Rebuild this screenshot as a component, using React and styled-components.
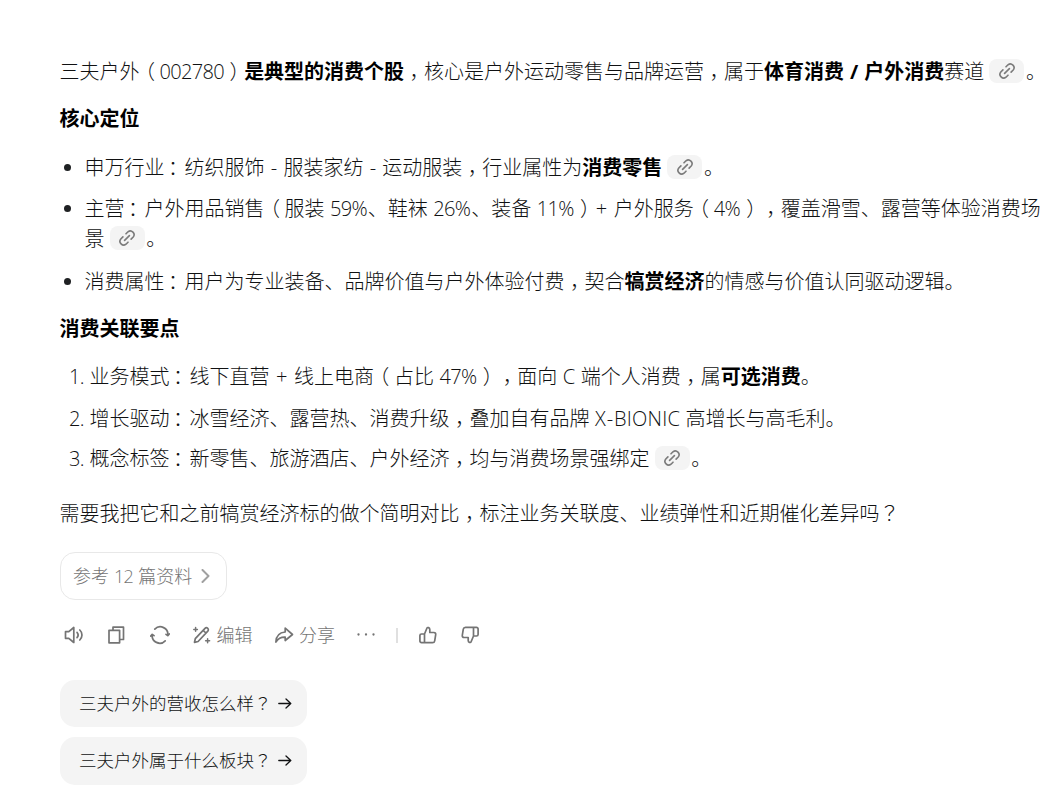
import React from "react";
import styled, { createGlobalStyle } from "styled-components";

const Global = createGlobalStyle`
  body { margin: 0; background: #fff; overflow: hidden; }
  * { box-sizing: border-box; }
`;

const Page = styled.main`
  width: 1060px;
  height: 803px;
  padding: 56px 0 0 59.5px;
  overflow: hidden;
  color: #101112;
  font: 300 20px/30px "Noto Sans CJK SC", sans-serif;
  white-space: nowrap;
  text-spacing-trim: space-all;
`;

const Latin = styled.span`
  font-family: "Open Sans", "Noto Sans CJK SC", sans-serif;
  line-height: 1;
  letter-spacing: ${(p) => p.$track || 0}em;
  padding: 0 ${(p) => p.$pad || 0}em;
`;

const Mark = styled.span`
  font-feature-settings: "halt";
  margin: 0 ${(p) => 0.25 - p.$shift}em 0 ${(p) => 0.25 + p.$shift}em;
`;

const Query = styled.span`
  font-family: "Noto Sans CJK TC", sans-serif;
  line-height: 1;
`;

const Paragraph = styled.p`
  margin: ${(p) => p.$top || 0}px 0 0;
`;

const Heading = styled.h3`
  margin: 17px 0 0;
  font: inherit;
  font-weight: 700;
  color: #000;
`;

const Strong = styled.strong`
  font-weight: 700;
  color: #000;
`;

const List = styled.ul`
  list-style: none;
  margin: ${(p) => p.$top}px 0 0;
  padding: 0;
`;

const Item = styled.li`
  display: flex;
  margin-top: ${(p) => p.$gap || 0}px;
`;

const Bullet = styled.span`
  flex: none;
  width: 7px;
  height: 7px;
  border-radius: 50%;
  background: #1f2123;
  margin: 12px 13.5px 0 4.5px;
`;

const Order = styled.span`
  flex: none;
  width: 30px;
  padding-left: 9.5px;
`;

const Cite = styled.span`
  display: inline-flex;
  align-items: center;
  justify-content: center;
  width: 35px;
  height: 24px;
  margin: 0 1.5px 0 5.2px;
  border-radius: 8px;
  background: #f4f4f4;
  color: #7b7b7b;
  vertical-align: -1px;
`;

const Sources = styled.button`
  display: flex;
  align-items: center;
  gap: 9px;
  width: 167px;
  height: 48px;
  margin: 24px 0 0 0.5px;
  padding: 0 12px;
  border: 1px solid #e8e8e8;
  border-radius: 15px;
  background: #fff;
  color: #747474;
  font: inherit;
  font-size: 18px;
`;

const Label = styled.span`
  padding-bottom: 2px;
`;

const Toolbar = styled.div`
  display: flex;
  align-items: center;
  height: 30px;
  margin-top: 20px;
  padding-left: 4.5px;
  color: #747474;
  font-size: 18px;
`;

const Tool = styled.span`
  display: flex;
  align-items: center;
  gap: ${(p) => p.$gap || 0}px;
  width: ${(p) => p.$w}px;
`;

const Divider = styled.span`
  width: 2px;
  height: 15px;
  margin-right: 20px;
  background: #e0e0e0;
`;

const Suggestion = styled.button`
  display: flex;
  align-items: center;
  gap: 6px;
  width: 247px;
  height: ${(p) => p.$h}px;
  margin: ${(p) => p.$top}px 0 0 0.5px;
  padding: 0 0 0 19px;
  border: 0;
  border-radius: 15px;
  background: #f4f4f4;
  color: #101112;
  font: inherit;
  font-size: 17.5px;
`;

const Svg = styled.svg`
  flex: none;
  display: block;
  fill: none;
  stroke: currentColor;
  stroke-width: ${(p) => p.$sw || 1.7};
  stroke-linecap: round;
  stroke-linejoin: round;
`;

const Chevron = styled(Svg)`
  color: #a0a0a0;
`;

const shifts = { "（": 0.02, "）": 0.02, "，": 0.02, "：": -0.08 };

function T({ children }) {
  return children.split(/([（），：？]|[0-9]+|[-+/]|[ -~])/).filter(Boolean).map((s, i) => {
    if (s === "？") return <Query key={i}>{s}</Query>;
    if (s in shifts) return <Mark key={i} $shift={shifts[s]}>{s}</Mark>;
    if (/^[0-9]+$/.test(s)) return <Latin key={i} $track={-0.032}>{s}</Latin>;
    if (/^[-+/]$/.test(s)) return <Latin key={i} $pad={s === "+" ? 0.055 : s === "-" ? 0.04 : 0.025}>{s}</Latin>;
    if (/^[ -~]+$/.test(s)) return <Latin key={i} $track={0.012}>{s}</Latin>;
    return s;
  });
}

const Link = () => (
  <Cite>
    <Svg width="18" height="18" viewBox="0 0 18 18" $sw={1.6}>
      <path d="M8 4.8 10 2.8a3.7 3.7 0 0 1 5.2 5.2L13.1 10.1M10 13.2l-2 2A3.7 3.7 0 0 1 2.8 10l2.1-2.1M6.6 11.4l4.8-4.8" />
    </Svg>
  </Cite>
);

const Icon = ({ children }) => (
  <Svg width="20" height="20" viewBox="0 0 20 20">{children}</Svg>
);

const Arrow = () => (
  <Svg width="14" height="14" viewBox="0 0 14 14" $sw={1.3}>
    <path d="M.8 6.500h12M8 2l4.800 4.500L8 11" />
  </Svg>
);

const thumb = "M6.500 9 9 3c.4-.9 2.800-.5 2.800 1.500v3h4.100c1.300 0 2 1 1.800 2.100l-1 6.200c-.2 1.200-1 1.900-2.200 1.900H3.500a1.600 1.600 0 0 1-1.600-1.600v-5.500C1.900 9.700 2.600 9 3.500 9zM6.500 9v8.700";

export default function App() {
  return (
    <>
      <Global />
      <Page>
        <Paragraph>
          <T>三夫户外（002780）</T><Strong>是典型的消费个股</Strong><T>，核心是户外运动零售与品牌运营，属于</T>
          <Strong><T>体育消费 / 户外消费</T></Strong>赛道<Link />。
        </Paragraph>
        <Heading>核心定位</Heading>
        <List $top={19}>
          <Item>
            <Bullet />
            <div><T>申万行业：纺织服饰 - 服装家纺 - 运动服装，行业属性为</T><Strong>消费零售</Strong><Link />。</div>
          </Item>
          <Item $gap={11}>
            <Bullet />
            <div><T>主营：户外用品销售（服装 59%、鞋袜 26%、装备 11%）+ 户外服务（4%），覆盖滑雪、露营等体验消费场</T><br />景<Link />。</div>
          </Item>
          <Item $gap={13}>
            <Bullet />
            <div><T>消费属性：用户为专业装备、品牌价值与户外体验付费，契合</T><Strong>犒赏经济</Strong>的情感与价值认同驱动逻辑。</div>
          </Item>
        </List>
        <Heading>消费关联要点</Heading>
        <List as="ol" $top={18}>
          <Item>
            <Order><T>1.</T></Order>
            <div><T>业务模式：线下直营 + 线上电商（占比 47%），面向 C 端个人消费，属</T><Strong>可选消费</Strong>。</div>
          </Item>
          <Item $gap={12}>
            <Order><T>2.</T></Order>
            <div><T>增长驱动：冰雪经济、露营热、消费升级，叠加自有品牌 X-BIONIC 高增长与高毛利。</T></div>
          </Item>
          <Item $gap={10}>
            <Order><T>3.</T></Order>
            <div><T>概念标签：新零售、旅游酒店、户外经济，均与消费场景强绑定</T><Link />。</div>
          </Item>
        </List>
        <Paragraph $top={25}><T>需要我把它和之前犒赏经济标的做个简明对比，标注业务关联度、业绩弹性和近期催化差异吗？</T></Paragraph>

        <Sources>
          <Label><T>参考 12 篇资料</T></Label>
          <Chevron width="9" height="14" viewBox="0 0 9 14" $sw={2}><path d="m1.500 1 6 6-6 6" /></Chevron>
        </Sources>

        <Toolbar>
          <Tool $w={42}>
            <Icon><path d="M1.500 6.700h3.300l5-4.200v15l-5-4.200H1.500zM13 7.300c1.300 1.500 1.300 3.900 0 5.400M15.800 5c2.900 2.700 2.900 7.300 0 10" /></Icon>
          </Tool>
          <Tool $w={43.500}>
            <Icon><path d="M7 5V2.200h10.500v12.300h-3.500M3 5.300h10.600v12.500H3z" /></Icon>
          </Tool>
          <Tool $w={42}>
            <Icon><path d="M4.800 4.200A7.600 7.600 0 0 1 17.800 10.500M15.200 15.800A7.600 7.600 0 0 1 2.200 9.500M.7 11l1.500-1.700 1.800 1.400M19.300 9l-1.500 1.700-1.800-1.400" /></Icon>
          </Tool>
          <Tool $w={82.500} $gap={5}>
            <Icon>
              <path d="m2.500 17.300.8-3.600L13 3.400a1.900 1.900 0 0 1 2.800 2.700L6.100 16.500zM11.200 5.400l2.700 2.600" />
              <path strokeWidth="1.500" d="M3.600 2.600v3.600M1.800 4.400h3.600M15.600 13.800v4M13.600 15.800h4" />
            </Icon>
            <Label>编辑</Label>
          </Tool>
          <Tool $w={82} $gap={5}>
            <Icon><path d="M11.200 3.200 18.500 9.500l-7.300 6v-3.300c-4-.2-6.800 1-9.300 4.800.2-5.700 3.500-9.500 9.300-10z" /></Icon>
            <Label>分享</Label>
          </Tool>
          <Tool $w={39.500}>
            <Svg width="20" height="20" viewBox="0 0 20 20" $sw={2.3}><path d="M2.500 9.500h.01M10 9.500h.01M17.500 9.500h.01" /></Svg>
          </Tool>
          <Divider />
          <Tool $w={42}><Icon><path d={thumb} /></Icon></Tool>
          <Tool $w={20}><Icon><path transform="rotate(180 10 10)" d={thumb} /></Icon></Tool>
        </Toolbar>

        <Suggestion $h={47} $top={30}><Label><T>三夫户外的营收怎么样？</T></Label><Arrow /></Suggestion>
        <Suggestion $h={48} $top={10}><Label><T>三夫户外属于什么板块？</T></Label><Arrow /></Suggestion>
      </Page>
    </>
  );
}
